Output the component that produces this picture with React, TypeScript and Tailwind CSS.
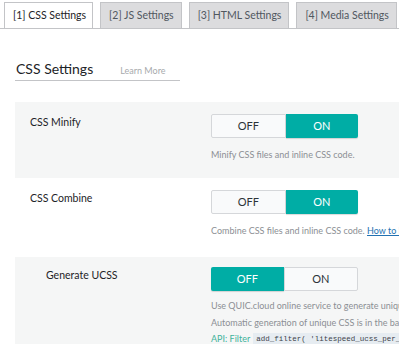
import React from 'react';

const font = { fontFamily: 'Lato, "Open Sans", sans-serif' };

const tabs = ['[1] CSS Settings', '[2] JS Settings', '[3] HTML Settings', '[4] Media Settings'];

const Toggle = ({ on }: { on: boolean }) => (
  <div className="flex h-[24px] w-[147px] text-[11px]">
    <div
      className={
        on
          ? 'flex-1 flex items-center justify-center rounded-l-[2px] border border-[#d5d7da] bg-[#f9fafb] text-[#2c3338]'
          : 'flex-1 flex items-center justify-center rounded-l-[2px] bg-[#00ada5] text-white shadow-[0_1px_1px_rgba(0,0,0,0.15)]'
      }
    >
      OFF
    </div>
    <div
      className={
        on
          ? 'flex-1 flex items-center justify-center rounded-r-[2px] bg-[#00ada5] text-white shadow-[0_1px_1px_rgba(0,0,0,0.15)]'
          : 'flex-1 flex items-center justify-center rounded-r-[2px] border border-[#d5d7da] bg-[#f9fafb] text-[#2c3338]'
      }
    >
      ON
    </div>
  </div>
);

const App: React.FC = () => {
  return (
    <div style={font} className="w-[399px] h-[344px] overflow-hidden bg-white">
      {/* Tabs */}
      <div className="flex gap-[7px] pl-[4px] pt-[2px] border-b border-[#c3c4c7] whitespace-nowrap">
        {tabs.map((t, i) => (
          <div
            key={t}
            className={
              i === 0
                ? 'h-[26px] pl-[8px] pr-[6px] flex items-center border border-b-0 border-[#c3c4c7] bg-white text-[10.5px] text-[#1d2327] shrink-0'
                : 'h-[26px] pl-[8px] pr-[7px] flex items-center border border-b-0 border-[#c3c4c7] bg-[#dcdcde] text-[10.5px] text-[#50575e] shrink-0'
            }
          >
            {t}
          </div>
        ))}
      </div>

      {/* Heading */}
      <div className="ml-[15px] mt-[29px] w-[165px] border-b border-[#c3c4c7] flex items-baseline">
        <span className="text-[14px] leading-[22px] text-[#1d2327] pl-[1px]">CSS Settings</span>
        <span className="ml-[27px] text-[9px] text-[#a7aaad]">Learn More</span>
      </div>

      {/* Rows */}
      <div className="ml-[15px] mt-[21px] whitespace-nowrap">
        <div className="flex bg-[#f5f6f6] h-[76px] pt-[12px]">
          <div className="w-[196px] shrink-0 pl-[15px] pt-[1px] text-[10.5px] text-[#1d2327]">CSS Minify</div>
          <div className="shrink-0">
            <Toggle on />
            <div className="mt-[10px] text-[9px] text-[#8c8f94]">Minify CSS files and inline CSS code.</div>
          </div>
        </div>

        <div className="flex bg-white h-[79px] pt-[12px]">
          <div className="w-[196px] shrink-0 pl-[15px] pt-[1px] text-[10.5px] text-[#1d2327]">CSS Combine</div>
          <div className="shrink-0">
            <Toggle on />
            <div className="mt-[10px] text-[9px] text-[#8c8f94]">
              Combine CSS files and inline CSS code.{' '}
              <span className="text-[#2271b1] underline">How to Fix Problems Caused by CSS/JS Optimization.</span>
            </div>
          </div>
        </div>

        <div className="flex bg-[#f5f6f6] h-[100px] pt-[10px]">
          <div className="w-[196px] shrink-0 pl-[31px] pt-[1px] text-[10.5px] text-[#1d2327]">Generate UCSS</div>
          <div className="shrink-0">
            <Toggle on={false} />
            <div className="mt-[7px] text-[9px] leading-[16.5px] text-[#8c8f94]">
              <div>Use QUIC.cloud online service to generate unique CSS.</div>
              <div>Automatic generation of unique CSS is in the background via a cron-based queue.</div>
              <div className="flex items-center">
                <span className="text-[#3fb39b]">API: Filter</span>
                <code
                  className="ml-[3px] px-[3px] leading-[13px] bg-[#e6ecf1] text-[#3c434a] text-[7.5px]"
                  style={{ fontFamily: '"Liberation Mono", "DejaVu Sans Mono", monospace' }}
                >
                  add_filter( 'litespeed_ucss_per_pagetype', '__return_true' );
                </code>
              </div>
            </div>
          </div>
        </div>
      </div>
    </div>
  );
};

export default App;
